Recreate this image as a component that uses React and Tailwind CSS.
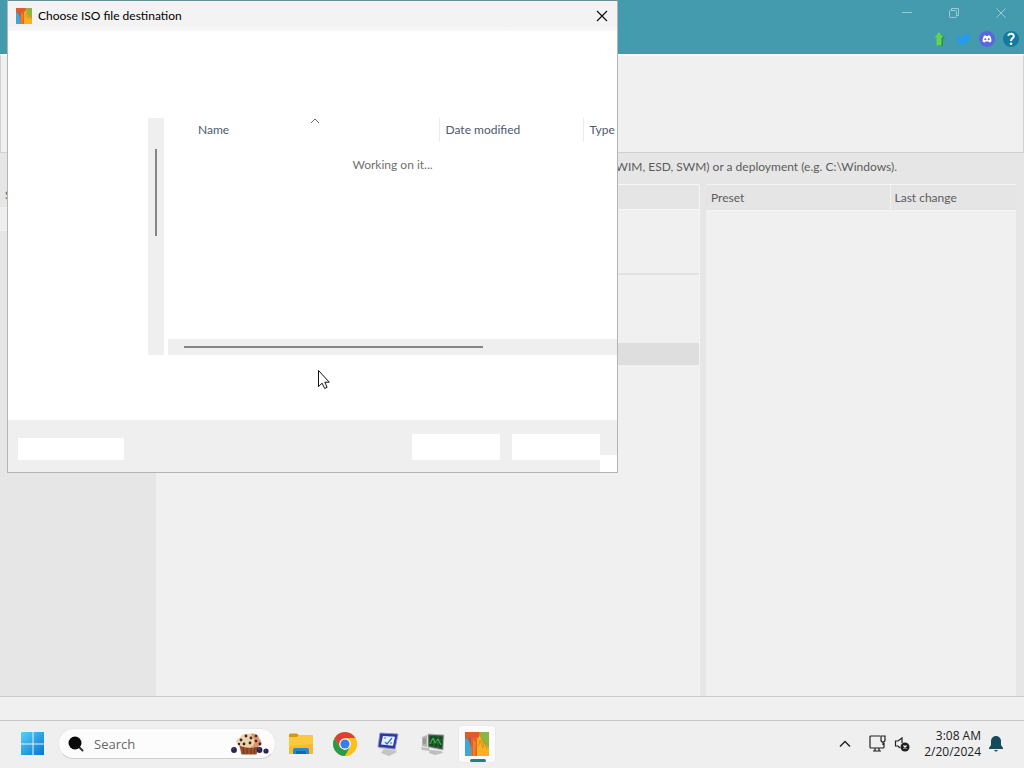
import React from "react";

function AppLogo({ className }) {
  return (
    <svg viewBox="0 0 24 24" className={className} aria-hidden="true">
      <rect width="24" height="24" fill="#ef7a22" />
      <rect y="6" width="6" height="18" fill="#39a9dc" />
      <path d="M0 0h14v5L6 7H0z" fill="#de5a30" />
      <path d="M15 0h9v17l-5-1-3-8z" fill="#8cb640" />
      <path d="M12 8l3-5 2 7 7 6v8H12z" fill="#f7b31f" />
      <path d="M5 5l7 2v17H7z" fill="#e2632a" />
      <path d="M8 7l3 3-1 14H8z" fill="#ef8127" />
      <path d="M13 15l2-7 3 8 1-7 3 8" fill="none" stroke="#dd8f22" strokeWidth="1" />
      <path d="M3 6l3-1v10z" fill="#b9573b" />
    </svg>
  );
}

function CaptionButton({ label, children }) {
  return (
    <button type="button" aria-label={label} className="flex h-[26px] w-[47px] items-center justify-center text-[#9ccbd6]">
      <svg viewBox="0 0 12 12" className="size-3" fill="none" stroke="currentColor" strokeWidth="1">
        {children}
      </svg>
    </button>
  );
}

function TitleArea() {
  return (
    <header className="flex h-[54px] shrink-0 flex-col items-end bg-[#459bae]">
      <div className="flex">
        <CaptionButton label="Minimize"><path d="M1 5.500h10" /></CaptionButton>
        <CaptionButton label="Restore">
          <rect x="1.500" y="3.500" width="7" height="7" rx="1" />
          <path d="M3.500 3V1.500h7v7H9" />
        </CaptionButton>
        <CaptionButton label="Close"><path d="M1.500 1.500l9 9M10.500 1.500l-9 9" /></CaptionButton>
      </div>
      <nav aria-label="Links" className="flex h-[26px] items-center gap-2 pr-[5px]">
        <a href="#update" aria-label="Update">
          <svg viewBox="0 0 16 16" className="size-4">
            <path d="M9 2l5 5.500h-2v7.500H7V7h-2z" fill="#32845c" />
            <path d="M8 1l4.500 5.500h-2v8h-5v-8h-2z" fill="#62d44d" />
          </svg>
        </a>
        <a href="#twitter" aria-label="Twitter">
          <svg viewBox="0 0 16 16" className="size-4">
            <path d="M1 5c2 1.500 4 2 6.500 2C7.500 3.500 10 2 12.500 3.200L15 3l-1 4c0 5-6.500 8-13 5.500 1.500 0 2.500-.4 3.500-1C2.500 10.500 2 9.500 2.300 8.800 1 7.800.8 6 1 5z" fill="#229cf0" />
          </svg>
        </a>
        <a href="#discord" aria-label="Discord">
          <svg viewBox="0 0 16 16" className="size-4">
            <circle cx="8" cy="8" r="8" fill="#5966df" />
            <path d="M5 4.800l1.700-.5.4.6h1.800l.4-.6 1.700.5c1 1.700 1.600 3.600 1.400 5.600-.8.600-1.500.9-2.200 1l-.6-1H6.400l-.6 1c-.7-.1-1.400-.4-2.200-1C3.400 8.400 4 6.500 5 4.800z" fill="#fff" />
            <circle cx="6.300" cy="8.300" r="1" fill="#5966df" />
            <circle cx="9.700" cy="8.300" r="1" fill="#5966df" />
          </svg>
        </a>
        <a href="#help" aria-label="Help">
          <svg viewBox="0 0 16 16" className="size-4">
            <circle cx="8" cy="8" r="8" fill="#147ba0" />
            <path d="M5.200 4.800C6 2 11 2.200 10.800 5.200 10.700 7.400 8 7.300 8 10" fill="none" stroke="#fff" strokeWidth="2" />
            <circle cx="8" cy="12.800" r="1.300" fill="#fff" />
          </svg>
        </a>
      </nav>
    </header>
  );
}

function Workspace() {
  return (
    <main className="flex flex-1 bg-[#e6e6e6] font-[Lato,'Open_Sans',sans-serif] text-[12px] leading-4 text-[#5c5c5c]">
      <aside className="w-[156px] shrink-0 pt-[34px]">
        <p className="pl-[5px]">S</p>
        <div className="mt-1 h-6 bg-[#efefef]" />
      </aside>
      <div className="flex min-w-0 flex-1 flex-col">
        <p className="flex h-[31px] items-center justify-end pr-[127px] pb-1 whitespace-nowrap">
          WIM, ESD, SWM) or a deployment (e.g. C:\Windows).
        </p>
        <div className="flex flex-1 gap-[6px] pr-2">
          <section aria-label="Images" className="flex-1 border-r border-[#f4f4f4] bg-[#f0f0f0]">
            <div className="h-[26px] border-t border-b border-[#f6f6f6] bg-[#e5e5e5]" />
            <div className="h-[63px]" />
            <div className="h-[2px] bg-[#e2e2e2]" />
            <div className="h-[68px]" />
            <div className="h-[22px] bg-[#dedede]" />
          </section>
          <section aria-label="Presets" className="w-[310px] shrink-0 bg-[#f0f0f0]">
            <table className="w-full table-fixed border-collapse text-left">
              <thead>
                <tr className="h-[26px] border-y border-[#f4f4f4] bg-[#e5e5e5]">
                  <th className="w-[184px] border-r border-[#f2f2f2] px-[5px] py-0 font-normal">Preset</th>
                  <th className="px-1 py-0 font-normal">Last change</th>
                </tr>
              </thead>
            </table>
          </section>
        </div>
      </div>
    </main>
  );
}

function SaveDialog() {
  return (
    <div
      role="dialog"
      aria-labelledby="dialog-title"
      className="absolute top-0 left-[7px] flex h-[473px] w-[611px] flex-col border border-[#b4b4b4] border-t-[#648f98] bg-white font-[Lato,'Open_Sans',sans-serif] text-[12px] leading-4"
    >
      <div className="flex h-[30px] shrink-0 items-center bg-gradient-to-b from-[#f3f3f3] from-80% to-[#f8f8f8] pl-2">
        <AppLogo className="size-4" />
        <h1 id="dialog-title" className="flex-1 pl-[6px] text-black">Choose ISO file destination</h1>
        <button type="button" aria-label="Close dialog" className="flex h-full w-[30px] items-center justify-center">
          <svg viewBox="0 0 12 12" className="size-3" fill="none" stroke="#111" strokeWidth="1.200"><path d="M1 1l10 10M11 1L1 11" /></svg>
        </button>
      </div>

      <div className="flex flex-1 gap-1 pt-[87px] pb-[65px] pl-[140px]">
        <div className="flex w-4 shrink-0 justify-center bg-[#efefef] pt-[31px]">
          <div className="h-[87px] w-[2px] bg-[#858585]" />
        </div>
        <div className="flex min-w-0 flex-1 flex-col">
          <table className="w-full table-fixed border-collapse text-left">
            <thead>
              <tr className="h-6 text-[#4c5a6c]">
                <th className="relative w-[271px] border-r border-[#ebebeb] py-0 pr-0 pl-[30px] font-normal">
                  Name
                  <svg viewBox="0 0 10 6" className="absolute top-0 left-[142px] h-[6px] w-[10px]" fill="none" stroke="#666" strokeWidth="1"><path d="M1 5l4-4 4 4" /></svg>
                </th>
                <th className="w-36 border-r border-[#ebebeb] py-0 pr-0 pl-[6px] font-normal">Date modified</th>
                <th className="py-0 pr-0 pl-[6px] font-normal">Type</th>
              </tr>
            </thead>
          </table>
          <p className="flex-1 pt-[15px] text-center text-[#707070]">Working on it...</p>
          <div className="flex h-4 items-center bg-[#efefef] pl-4">
            <div className="h-[2px] w-[299px] bg-[#858585]" />
          </div>
        </div>
      </div>

      <footer className="relative flex h-[52px] shrink-0 items-start bg-[#efefef] pt-[14px] pr-[17px] pl-[10px]">
        <button type="button" aria-label="Hide folders" className="mt-1 h-[22px] w-[106px] bg-white" />
        <button type="button" aria-label="Save" className="ml-auto h-[26px] w-[88px] bg-white" />
        <button type="button" aria-label="Cancel" className="ml-3 h-[26px] w-[88px] bg-white" />
        <span className="absolute right-0 bottom-0 h-[17px] w-[17px] bg-white" />
      </footer>
    </div>
  );
}

function Pointer() {
  return (
    <svg viewBox="0 0 14 20" className="absolute top-[370px] left-[318px] h-5 w-[14px]" aria-hidden="true">
      <path d="M.5 .5v16l3.600-3.300 2.600 5.300 2.400-1.200-2.300-5.100h4.500z" fill="#fff" stroke="#111" strokeWidth="1" />
    </svg>
  );
}

function Muffin() {
  return (
    <svg viewBox="0 0 40 24" className="h-6 w-10 shrink-0" aria-hidden="true">
      <path d="M9 12h20l-2.500 10.500h-15z" fill="#9b542d" />
      <path d="M13 15l1 7M17 15v7M21 15v7M25 15l-1 7" stroke="#6e351c" strokeWidth="1" />
      <path d="M7 12c-2-3 0-6 3-6 1-4 6-5 9-4 4-2 9 0 9 4 4 1 4 6 1 8-7 3-17 2-22-2z" fill="#efd3a5" />
      <path d="M21 2c5-1 8 1 8 5 3 2 3 6 0 7-3 1-5 1-8 1 5-3 4-7 0-13z" fill="#dd926b" />
      <g fill="#37233b">
        <circle cx="11" cy="8" r="1.400" /><circle cx="16" cy="4" r="1.400" /><circle cx="21" cy="6" r="1.400" />
        <circle cx="26" cy="4" r="1.300" /><circle cx="14" cy="12" r="1.400" /><circle cx="20" cy="11" r="1.400" />
        <circle cx="26" cy="9" r="1.300" /><circle cx="30" cy="12" r="1.400" /><circle cx="9" cy="12" r="1.200" />
      </g>
      <g fill="#2d2150">
        <circle cx="4" cy="18" r="2.900" /><circle cx="29.500" cy="18" r="2.900" /><circle cx="36" cy="19" r="2.600" />
      </g>
      <g fill="#655684">
        <circle cx="3.500" cy="17" r=".8" /><circle cx="29" cy="17" r=".8" /><circle cx="35.500" cy="18" r=".7" />
      </g>
    </svg>
  );
}

function TaskButton({ label, children }) {
  return (
    <button type="button" aria-label={label} className="flex h-10 w-11 shrink-0 items-center justify-center">
      {children}
    </button>
  );
}

function Taskbar() {
  return (
    <footer className="flex h-12 shrink-0 items-center border-t border-[#c6c6c6] bg-[#efefef] pb-[2px]">
      <button type="button" aria-label="Start" className="ml-[21px] shrink-0">
        <svg viewBox="0 0 24 24" className="size-6">
          <defs>
            <linearGradient id="start-fill" x1="0" y1="0" x2="1" y2="1" >
              <stop offset="0" stopColor="#56d0fb" /><stop offset="1" stopColor="#0875cc" />
            </linearGradient>
          </defs>
          <path d="M1 0h10.500v11.500H0V1zM12.500 0H23v11.500H12.500zM0 12.500h11.500V23H0zM12.500 12.500H23V23H12.500z" fill="url(#start-fill)" />
        </svg>
      </button>
      <label className="ml-[13px] flex h-[31px] w-[218px] shrink-0 items-center rounded-full border border-[#e9e9e9] border-b-[#cfcfcf] bg-[#fcfcfc] pr-[5px] pl-[9px]">
        <svg viewBox="0 0 16 16" className="size-4 shrink-0" aria-hidden="true">
          <path d="M10 10l4.500 4.500" stroke="#333" strokeWidth="2" strokeLinecap="round" />
          <circle cx="7" cy="7" r="6.500" fill="#090909" />
        </svg>
        <input type="search" aria-label="Search" placeholder="Search" className="ml-[10px] w-0 min-w-0 flex-1 bg-transparent text-[13px] leading-4 outline-none placeholder:text-[#666666]" />
        <Muffin />
      </label>
      <nav aria-label="Taskbar apps" className="ml-[3px] flex items-center">
        <TaskButton label="File Explorer">
          <svg viewBox="0 0 24 24" className="size-6">
            <path d="M0 3c0-1 1-1.500 2-1.500h6l2 2-2 3H0z" fill="#d5961a" />
            <path d="M0 5h8l2-2h13q1 0 1 1v17q0 1-1 1H1q-1 0-1-1z" fill="#fbc93d" />
            <path d="M0 14v7q0 1 1 1h22q1 0 1-1v-9z" fill="#f7bb2b" />
            <path d="M6 16h12q2 0 2 2v4H4v-4q0-2 2-2z" fill="#2589cc" />
            <path d="M7 19h10v3H7z" fill="#116aac" />
          </svg>
        </TaskButton>
        <TaskButton label="Chrome">
          <svg viewBox="0 0 24 24" className="size-6">
            <circle cx="12" cy="12" r="12" fill="#fbc116" />
            <path d="M1.610 6A12 12 0 0 1 22.390 6H12L6.800 15z" fill="#dc4035" />
            <path d="M1.610 6A12 12 0 0 0 12 24l5.200-9-5.200 3-5.200-3z" fill="#279b4b" />
            <path d="M12 6h10.390A12 12 0 0 1 12 24l5.200-9z" fill="#fbc116" />
            <circle cx="12" cy="12" r="5.800" fill="#fff" />
            <circle cx="12" cy="12" r="4.600" fill="#347ee5" />
          </svg>
        </TaskButton>
        <TaskButton label="Performance monitor">
          <svg viewBox="0 0 24 24" className="size-6">
            <path d="M7 17l10 1 3 2-8 4-8-3z" fill="#c3c4c2" />
            <path d="M2 15l17 2 1 2-17-2z" fill="#d8d6cf" />
            <path d="M3 1l18 1-3 15-17-2z" fill="#2c38a8" stroke="#8a90c2" strokeWidth=".8" />
            <path d="M6 4l12 .8-2 9L4 12.500z" fill="#e6f2ff" />
            <path d="M8 10l2 2 5-6M7 6h2M13 11h2" fill="none" stroke="#386faf" strokeWidth="1.200" />
          </svg>
        </TaskButton>
        <TaskButton label="System monitor">
          <svg viewBox="0 0 24 24" className="size-6">
            <path d="M1 5l5-2v12l-5-1z" fill="#b3b7b4" />
            <path d="M2 7h3M2 9h3M2 11h3" stroke="#6e746f" strokeWidth=".8" />
            <path d="M0 15l8 1 1 3-8-1zM9 18l11 1 2 2-8 2-6-2z" fill="#bdbfbc" />
            <path d="M7 2l16 1-1 15-15-3z" fill="#4c5b50" stroke="#b6bbb7" strokeWidth=".8" />
            <path d="M8.500 4l13 .5-.7 11.500L8.500 13.500z" fill="#114c22" />
            <path d="M9 8h12M9 11h12M13 5v9M17 5v10" stroke="#2b8140" strokeWidth=".7" />
            <path d="M9 12l3-6 2 5 3-4 3 6" fill="none" stroke="#4db54c" strokeWidth="1" />
          </svg>
        </TaskButton>
        <button type="button" aria-label="NTLite" className="relative ml-[3px] flex size-[38px] items-center justify-center rounded border border-[#eaeaea] bg-[#fbfbfb]">
          <AppLogo className="size-6" />
          <span className="absolute bottom-0 left-[11px] h-[3px] w-4 rounded-full bg-[#287d81]" />
        </button>
      </nav>
      <div className="ml-auto flex items-center pr-[21px] text-[#202020]">
        <button type="button" aria-label="Show hidden icons" className="mr-[18px]">
          <svg viewBox="0 0 12 12" className="size-3" fill="none" stroke="currentColor" strokeWidth="1.400"><path d="M1 8.500l5-5 5 5" /></svg>
        </button>
        <button type="button" aria-label="Network" className="mr-2">
          <svg viewBox="0 0 17 17" className="size-[17px]" fill="none" stroke="currentColor" strokeWidth="1.200">
            <path d="M11 1H2q-1 0-1 1v10q0 1 1 1h12q1 0 1-1V8M6 13v3M10 13v3M4 16h8M12 1h4v4q0 2-2 2t-2-2zM14 7v3" />
          </svg>
        </button>
        <button type="button" aria-label="Volume muted" className="mr-[14px]">
          <svg viewBox="0 0 16 16" className="size-4" fill="none" stroke="currentColor" strokeWidth="1.200">
            <path d="M8 7V2L4 5H1.500v5H4l2 2" />
            <circle cx="11" cy="11" r="4.500" fill="#202020" stroke="none" />
            <path d="M9.500 9.500l3 3M12.500 9.500l-3 3" stroke="#fff" />
          </svg>
        </button>
        <time dateTime="2024-02-20T03:08" className="mr-2 text-right text-[12px] leading-4">
          3:08 AM<br />2/20/2024
        </time>
        <button type="button" aria-label="Notifications">
          <svg viewBox="0 0 14 16" className="h-4 w-[14px]" fill="#154b5b">
            <path d="M7 0a5 5 0 0 1 5 5v4l2 3v1H0v-1l2-3V5a5 5 0 0 1 5-5zM5 14h4q-2 3-4 0z" />
          </svg>
        </button>
      </div>
    </footer>
  );
}

export default function App() {
  return (
    <div className="relative flex min-h-screen flex-col overflow-hidden bg-[#f0f0f0] font-['Open_Sans','Noto_Sans',sans-serif]">
      <TitleArea />
      <div className="h-[99px] shrink-0 border-x border-b border-[#d0d0d0] border-t-2 border-t-[#f8f8f8] bg-[#f0f0f0]" />
      <Workspace />
      <div className="h-6 shrink-0 border-t border-[#cccccc] bg-[#f0f0f0]" />
      <Taskbar />
      <SaveDialog />
      <Pointer />
    </div>
  );
}
